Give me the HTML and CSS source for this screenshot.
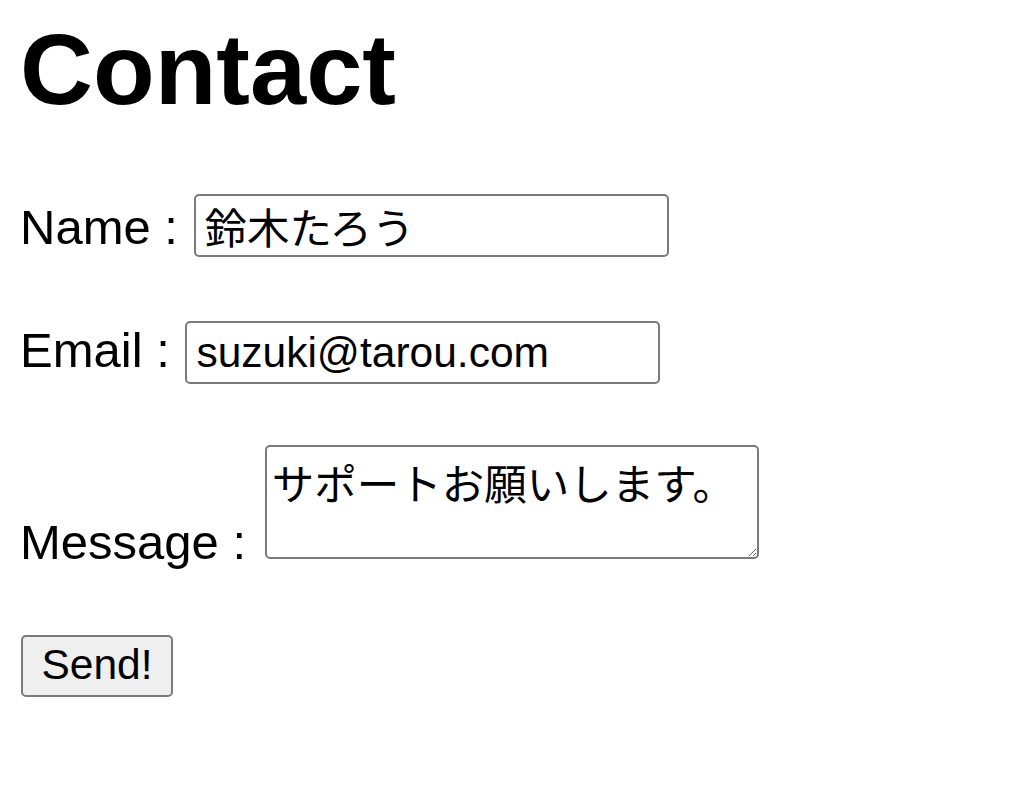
FILE: index.html
```html
<!DOCTYPE html>
<html lang="ja">
<head>
<meta charset="utf-8">
<title>Contact</title>
<link rel="stylesheet" href="styles.css">
</head>
<body>
<h1 class="title">Contact</h1>
<form class="contact-form">
  <div class="row row-name"><label for="name">Name :</label> <input class="field field-name" id="name" type="text" value="鈴木たろう"></div>
  <div class="row row-email"><label for="email">Email :</label> <input class="field field-email" id="email" type="email" value="suzuki@tarou.com"></div>
  <div class="row row-message"><label for="message">Message :</label> <textarea class="field field-message" id="message">サポートお願いします。</textarea></div>
  <div class="row row-send"><button class="send" type="submit">Send!</button></div>
</form>
</body>
</html>
```
FILE: styles.css
```css
html, body {
  margin: 0;
  padding: 0;
  background: #ffffff;
}
body {
  padding-left: 20px;
  font-family: "Liberation Sans", "Noto Sans CJK JP", sans-serif;
  font-size: 49px;
  line-height: 1.15;
  color: #000;
}
.title {
  font-size: 101px;
  font-weight: bold;
  line-height: 1.15;
  margin: 11px 0 67px;
}
.contact-form {
  margin: 0;
}
.row {
  margin: 0;
}
.row-email { margin-top: 64px; }
.row-message { margin-top: 61px; }
.row-send { margin-top: 64px; }

.field {
  font-family: "Liberation Sans", "Noto Sans CJK JP", sans-serif;
  font-size: 42.5px;
  line-height: 1.15;
  color: #000;
  background: #fff;
  border: 2px solid #7a7a7a;
  border-radius: 5px;
  box-sizing: border-box;
  margin: 0 0 0 2px;
}
.field-name,
.field-email {
  width: 475px;
  height: 63px;
  padding: 0 9px;
}
.field-message {
  width: 494px;
  height: 114px;
  padding: 15px 5px 3px;
  margin-left: 5px;
  vertical-align: baseline;
  resize: both;
}
.send {
  font-family: "Liberation Sans", "Noto Sans CJK JP", sans-serif;
  font-size: 42.5px;
  line-height: 1.15;
  color: #000;
  background: #efefef;
  border: 2px solid #7a7a7a;
  border-radius: 5px;
  box-sizing: border-box;
  height: 62px;
  width: 152px;
  padding: 0;
  margin: 0 0 0 1px;
}
```
